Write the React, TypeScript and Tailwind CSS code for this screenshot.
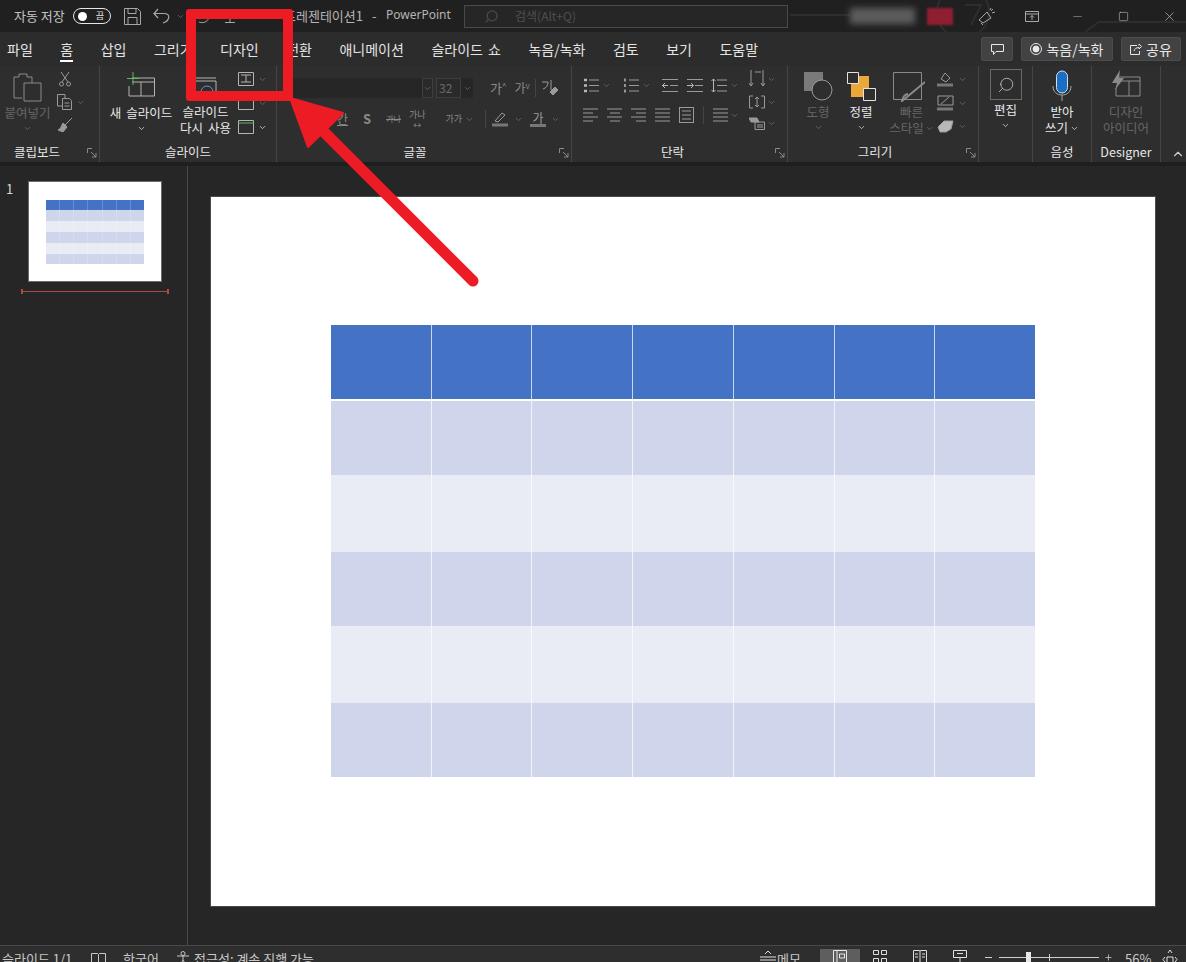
import type { ReactNode } from "react";
import { ChevronDown, ChevronUp, Minus, Plus, Search, Square, X } from "lucide-react";

const tabs = ["파일", "홈", "삽입", "그리기", "디자인", "전환", "애니메이션", "슬라이드 쇼", "녹음/녹화", "검토", "보기", "도움말"];
const rows = ["h-[76px] bg-[#4472c4]", "h-[74px] bg-[#cfd5ea]", "h-[77px] bg-[#e9ebf5]", "h-[74px] bg-[#cfd5ea]", "h-[77px] bg-[#e9ebf5]", "h-[74px] bg-[#cfd5ea]"];
const thumbRows = ["h-[10px] bg-[#4472c4]", "h-[11px] bg-[#cfd5ea]", "h-[11px] bg-[#e9ebf5]", "h-[11px] bg-[#cfd5ea]", "h-[11px] bg-[#e9ebf5]", "h-[10px] bg-[#cfd5ea]"];
const cols = [0, 1, 2, 3, 4, 5, 6];

function Chev({ on = false, className = "" }: { on?: boolean; className?: string }) {
  return <ChevronDown size={9} strokeWidth={2} className={`shrink-0 ${on ? "text-[#e0e0e0]" : "text-[#6e6e6e]"} ${className}`} />;
}

function Icon({ w = 16, h = 16, children, className = "" }: { w?: number; h?: number; children: ReactNode; className?: string }) {
  return (
    <svg width={w} height={h} viewBox={`0 0 ${w} ${h}`} fill="none" stroke="#9a9a9a" strokeWidth="1" className={`shrink-0 ${className}`}>
      {children}
    </svg>
  );
}

function Lines({ kind = "plain" }: { kind?: "plain" | "bullets" | "numbers" | "outdent" | "indent" | "spacing" }) {
  return (
    <Icon w={16} h={15}>
      {kind === "bullets" && <path d="M1 2h3M1 7.500h3M1 13h3" stroke="#b8b8b8" strokeWidth="2.500" />}
      {kind === "numbers" && <path d="M2 .500v3M2 6v3M2 11.500v3" stroke="#b8b8b8" strokeWidth="1.500" />}
      {kind === "outdent" && <path d="M0 7.500h6M3 5 .500 7.500 3 10" stroke="#b8b8b8" />}
      {kind === "indent" && <path d="M0 7.500h6M4 5l2.500 2.500L4 10" stroke="#b8b8b8" />}
      {kind === "spacing" && <path d="M2.500 1v13M.5 3l2-2 2 2M.5 12l2 2 2-2" stroke="#b8b8b8" />}
      {kind === "outdent" || kind === "indent" ? <path d="M0 1.500h16M8 7.500h8M0 13.500h16" /> : <path d="M6 2h10M6 7.500h10M6 13h10" />}
    </Icon>
  );
}

function Align({ kind }: { kind: number }) {
  const d = [
    "M0 2h15M0 6h10M0 10h15M0 14h10",
    "M0 2h15M3 6h10M0 10h15M3 14h10",
    "M0 2h15M5 6h10M0 10h15M5 14h10",
    "M0 2h15M0 6h15M0 10h15M0 14h15",
    "M.5 0v16M14.500 0v16M0 .500h15M0 15.500h15M3 4h9M3 8h9M3 12h9",
  ][kind];
  return (
    <Icon w={15} h={16}>
      <path d={d} />
    </Icon>
  );
}

function Group({ w, label, launcher, pad = "pr-[16px]", children }: { w: string; label: string; launcher?: boolean; pad?: string; children: ReactNode }) {
  return (
    <div className={`${w} h-full shrink-0 flex flex-col border-r border-[#454545]`}>
      <div className="h-[76px] flex">{children}</div>
      <div className={`relative h-[20px] flex items-center justify-center text-[12.500px] text-[#e6e6e6] ${launcher ? pad : ""}`}>
        {label}
        {launcher && (
          <svg width="10" height="10" viewBox="0 0 10 10" fill="none" stroke="#8a8a8a" className="absolute right-[2px] top-[6px]">
            <path d="M.5 5V.5H5M4 4l5 5M9 5v4H5" />
          </svg>
        )}
      </div>
    </div>
  );
}

function Label({ on = false, children }: { on?: boolean; children: ReactNode }) {
  return <div className={`text-[12.500px] leading-[16px] text-center whitespace-nowrap [word-spacing:2px] ${on ? "text-[#e8e8e8]" : "text-[#666666]"}`}>{children}</div>;
}

function TitleBar() {
  return (
    <div className="relative h-[32px] shrink-0 bg-[#202020] flex items-center text-[13px] text-[#c4c4c4] overflow-hidden">
      {/* faint wallpaper lines behind the title bar */}
      <svg width="1186" height="32" viewBox="0 0 1186 32" fill="none" stroke="#2e2e2e" strokeWidth="2" className="absolute left-0 top-0">
        <path d="M790 15h60M1085 32l14-10h87" />
        <circle cx="963" cy="12" r="26" />
        <path d="M965 5h16l-10 20" />
      </svg>
      <span className="relative ml-[14px] w-[59px] whitespace-nowrap">자동 저장</span>
      <div className="relative w-[38px] h-[16px] rounded-full border border-[#e6e6e6] flex items-center justify-between px-[4px]">
        <div className="w-[9px] h-[9px] rounded-full bg-white" />
        <span className="text-[9px] text-[#e6e6e6] mr-[2px]">끔</span>
      </div>
      <svg width="17" height="17" viewBox="0 0 17 17" fill="none" stroke="#a8a8a8" className="relative ml-[13px]">
        <path d="M.5.500h13l3 3v13H.500zM4 .500v5h8v-5M4 16.500v-7h9v7" />
      </svg>
      <svg width="18" height="16" viewBox="0 0 18 16" fill="none" stroke="#a8a8a8" strokeWidth="1.200" className="relative ml-[12px]">
        <path d="M5 1 1 5.500h10c7 0 6 7-1 9.500M1 5.500 5 10" />
      </svg>
      <Chev className="relative ml-[5px]" />
      <svg width="11" height="8" viewBox="0 0 11 8" fill="none" stroke="#a8a8a8" className="relative ml-[14px] mt-[8px]">
        <path d="M10 0c0 5-5 8-10 6" />
      </svg>
      <svg width="10" height="6" viewBox="0 0 10 6" fill="none" stroke="#a8a8a8" className="relative ml-[15px] mt-[7px]">
        <path d="M5 0v5M0 5.500h10" />
      </svg>
      <span className="relative ml-[49px] w-[180px] flex whitespace-nowrap text-[#b4b4b4]">
        <span className="w-[102px]">프레젠테이션1<span className="ml-[9px]">-</span></span>
        <span className="text-[12px] font-[family-name:'Noto_Sans',sans-serif]">PowerPoint</span>
      </span>
      <div className="relative w-[324px] h-[23px] border border-[#4a4a4a] bg-[#262626] flex items-center pl-[19px] text-[12px] text-[#4f4f4f]">
        <Search size={15} className="text-[#4a4a4a] -scale-x-100" />
        <span className="ml-[16px]">검색(Alt+Q)</span>
      </div>
      <div className="ml-[62px] w-[65px] h-[16px] bg-[#5c5c5c] blur-[3px]" />
      <div className="ml-[12px] w-[26px] h-[17px] bg-[#8f1f30] blur-[1px]" />
      <svg width="17" height="17" viewBox="0 0 17 17" fill="none" stroke="#a8a8a8" className="relative ml-[25px]">
        <path d="M1 12 9 4l4 6-8 5zM3 15l2 2M12 2l1-2M14 5l3-1M13 3l2-2" />
      </svg>
      <svg width="14" height="11" viewBox="0 0 14 11" fill="none" stroke="#a8a8a8" className="relative ml-[30px]">
        <path d="M.5.500h13v10H.500zM.5 3h13M7 9V4.500M5 6.500l2-2 2 2" />
      </svg>
      <Minus size={13} strokeWidth={1} className="relative ml-[32px] text-[#b0b0b0]" />
      <Square size={11} strokeWidth={1.200} className="relative ml-[34px] text-[#d0d0d0]" />
      <X size={15} strokeWidth={1} className="relative ml-[33px] text-[#d0d0d0]" />
    </div>
  );
}

function TabRow() {
  return (
    <div className="h-[34px] shrink-0 bg-[#2c2c2c] flex items-center pl-[7px] text-[14px] text-[#e4e4e4]">
      <div className="flex gap-[27.500px]">
        {tabs.map((t) => (
          <span key={t} className="relative whitespace-nowrap [word-spacing:2px]">
            {t}
            {t === "홈" && <span className="absolute left-0 right-0 top-[21px] h-[2px] bg-white" />}
          </span>
        ))}
      </div>
      <div className="ml-auto mr-[5px] flex gap-[8px] items-center text-[#e8e8e8]">
        <div className="w-[32px] h-[24px] rounded-[2px] bg-[#424242] border border-[#4c4c4c] flex items-center justify-center">
          <svg width="13" height="13" viewBox="0 0 13 13" fill="none" stroke="#e8e8e8">
            <path d="M.5 1.500h12v7H5l-2.500 3v-3H.500z" />
          </svg>
        </div>
        <div className="w-[92px] h-[24px] rounded-[2px] bg-[#424242] border border-[#4c4c4c] flex items-center justify-center gap-[4px]">
          <svg width="12" height="12" viewBox="0 0 12 12" fill="none" stroke="#e8e8e8">
            <circle cx="6" cy="6" r="5.500" />
            <circle cx="6" cy="6" r="3" fill="#e8e8e8" />
          </svg>
          녹음/녹화
        </div>
        <div className="w-[60px] h-[24px] rounded-[2px] bg-[#424242] border border-[#4c4c4c] flex items-center justify-center gap-[4px]">
          <svg width="12" height="12" viewBox="0 0 12 12" fill="none" stroke="#e8e8e8">
            <path d="M9 1v1.500M9 1l2.500 2.500L9 6V4.500C6 4.500 4.500 6 4 8M7 2.500H.5v9h9V8" />
          </svg>
          공유
        </div>
      </div>
    </div>
  );
}

function Ribbon() {
  return (
    <div className="h-[96px] shrink-0 bg-[#2e2e2e] flex">
      <Group w="w-[100px]" label="클립보드" launcher pad="pr-[25px]">
        <div className="w-[55px] flex flex-col items-center pt-[6px]">
          <svg width="29" height="30" viewBox="0 0 29 30" fill="none" stroke="#8a8a8a">
            <path d="M9 26H1V5h5V2h8v3h5v6M11 11h17v18H11z" />
          </svg>
          <div className="mt-[3px]"><Label>붙여넣기</Label></div>
          <Chev className="mt-[3px]" />
        </div>
        <div className="flex flex-col pt-[6px] pl-[2px] gap-[7px]">
          <Icon w={12} h={15} className="ml-[2px]">
            <path d="M2 0l7 10M10 0 3 10" />
            <circle cx="2.500" cy="12" r="2" />
            <circle cx="9.500" cy="12" r="2" />
          </Icon>
          <div className="flex items-center gap-[3px]">
            <Icon w={16} h={16}>
              <path d="M5 12H.5V.500H8V4M5.500 4.500h7l2 2v9h-9z" />
              <path d="M7.500 9h5M7.500 12h5" />
            </Icon>
            <Chev />
          </div>
          <Icon w={16} h={15}>
            <path d="M6 6l4 4-4 5-5-2c3-1 3-4 5-7zM8 8l7-7" fill="#9a9a9a" />
          </Icon>
        </div>
      </Group>
      <Group w="w-[177px]" label="슬라이드">
        <div className="w-[81px] flex flex-col items-center pt-[6px] pl-[1px]">
          <svg width="30" height="26" viewBox="0 0 30 26" fill="none" stroke="#b4b4b4">
            <path d="M6 6h22.500v18H3V14M15 10v14M6 10h22.500" />
            <path d="M7 0v13M1 6.500h12" stroke="#5fb85f" />
          </svg>
          <div className="mt-[7px]"><Label on>새 슬라이드</Label></div>
          <Chev on className="mt-[3px]" />
        </div>
        <div className="w-[49px] flex flex-col items-center pt-[9px]">
          <svg width="24" height="23" viewBox="0 0 24 23" fill="none" stroke="#b4b4b4">
            <path d="M1 3h21M1 6h21v17H1z" />
            <circle cx="13" cy="17" r="6" stroke="#5b9bd5" />
          </svg>
          <div className="mt-[6px]"><Label on>슬라이드</Label></div>
          <Label on>다시 사용</Label>
        </div>
        <div className="flex flex-col pl-[8px] pt-[6px] gap-[10px]">
          {["M3 3h10M8 3v7M3 10h10", "M3 3h10", "M.5 3h15"].map((d, i) => (
            <div key={d} className="flex items-center gap-[4px]">
              <svg width="16" height="14" viewBox="0 0 16 14" fill="none" stroke={i === 2 ? "#5fb85f" : "#b4b4b4"}>
                <path d="M.5 .500h15v13H.500z" stroke="#b4b4b4" />
                <path d={d} />
              </svg>
              <Chev on={i === 2} />
            </div>
          ))}
        </div>
      </Group>
      <Group w="w-[295px]" label="글꼴" launcher pad="pr-[18px]">
        <div className="pl-[12px] pt-[12px] flex flex-col">
          <div className="flex items-center text-[#6a6a6a]">
            <div className="w-[133px] h-[20px] bg-[#262626]" />
            <div className="w-[11px] h-[20px] bg-[#2a2a2a] border border-[#3e3e3e] flex items-center justify-center"><Chev /></div>
            <div className="ml-[3px] w-[25px] h-[20px] bg-[#2a2a2a] border border-[#3e3e3e] pl-[2px] text-[12px] leading-[18px]">32</div>
            <div className="w-[12px] h-[20px] bg-[#262626] flex items-center justify-center"><Chev /></div>
            <span className="ml-[17px] text-[13px] leading-[18px] text-[#8a8a8a]">가<sup className="text-[8px]">^</sup></span>
            <span className="ml-[8px] text-[12px] leading-[18px] text-[#8a8a8a]">가<sup className="text-[8px]">v</sup></span>
            <div className="ml-[5px] w-[1px] h-[18px] bg-[#444444]" />
            <svg width="18" height="18" viewBox="0 0 18 18" fill="none" stroke="#9a9a9a" className="ml-[5px]">
              <path d="M1 3h6c0 4-2 6-5 7M10 1v10" />
              <path d="m9 13 5-5 3 3-5 5z" fill="#9a9a9a" />
            </svg>
          </div>
          <div className="flex items-center mt-[10px] text-[#8a8a8a] h-[22px]">
            <span className="ml-[48px] text-[12px] underline">간</span>
            <span className="ml-[15px] text-[13px] font-bold">S</span>
            <span className="ml-[15px] text-[8px] line-through">가나</span>
            <span className="ml-[8px] flex flex-col items-center text-[9px] leading-[10px]">가나<span className="text-[8px] leading-[9px]">↔</span></span>
            <span className="ml-[20px] text-[9px]">가가</span>
            <Chev className="ml-[3px]" />
            <div className="ml-[11px] w-[1px] h-[18px] bg-[#444444]" />
            <svg width="16" height="16" viewBox="0 0 16 16" fill="none" stroke="#9a9a9a" className="ml-[6px]">
              <path d="M3 10 10 2l3 2-7 7z" />
              <path d="M0 14h16" strokeWidth="3" stroke="#777777" />
            </svg>
            <Chev className="ml-[6px]" />
            <div className="ml-[7px] flex flex-col items-center w-[16px] text-[12px] leading-[13px] text-[#9a9a9a]">
              가<div className="w-[16px] h-[3px] bg-[#777777]" />
            </div>
            <Chev className="ml-[5px]" />
          </div>
        </div>
      </Group>
      <Group w="w-[216px]" label="단락" launcher pad="pr-[14px]">
        <div className="pl-[11px] pt-[12px] w-[173px] flex flex-col gap-[13px]">
          <div className="flex items-center">
            <Lines kind="bullets" />
            <Chev className="ml-[3px]" />
            <div className="ml-[12px]"><Lines kind="numbers" /></div>
            <Chev className="ml-[3px]" />
            <div className="ml-[11px]"><Lines kind="outdent" /></div>
            <div className="ml-[9px]"><Lines kind="indent" /></div>
            <div className="ml-[8px]"><Lines kind="spacing" /></div>
            <Chev className="ml-[3px]" />
          </div>
          <div className="flex items-center gap-[9px]">
            <Align kind={0} />
            <Align kind={1} />
            <Align kind={2} />
            <Align kind={3} />
            <Align kind={4} />
            <div className="w-[1px] h-[18px] bg-[#444444]" />
            <div className="flex items-center gap-[2px]"><Align kind={3} /><Chev /></div>
          </div>
        </div>
        <div className="flex flex-col pt-[4px] pl-[4px] gap-[7px]">
          <div className="flex items-center gap-[2px]">
            <Icon w={16} h={18}>
              <path d="M2 0v16M0 13l2 3 2-3M14 0v16M12 13l2 3 2-3M6 2h6" />
            </Icon>
            <Chev />
          </div>
          <div className="flex items-center gap-[2px]">
            <Icon w={16} h={14}>
              <path d="M4 1H.5v12H4M12 1h3.500v12H12M8 2v10M6 4l2-2 2 2M6 10l2 2 2-2" />
            </Icon>
            <Chev />
          </div>
          <div className="flex items-center gap-[2px]">
            <Icon w={16} h={14}>
              <path d="M0 2h8l2 4H2z" fill="#9a9a9a" />
              <path d="M6 6h9.500v7.500H6zM8 9h6M8 11h6" />
            </Icon>
            <Chev />
          </div>
        </div>
      </Group>
      <Group w="w-[191px]" label="그리기" launcher>
        <div className="w-[60px] flex flex-col items-center pt-[6px]">
          <svg width="29" height="29" viewBox="0 0 29 29" fill="none">
            <path d="M0 0h19v19H0z" fill="#7a7a7a" />
            <circle cx="18" cy="18" r="10" fill="#2e2e2e" stroke="#9a9a9a" />
          </svg>
          <div className="mt-[3px]"><Label>도형</Label></div>
          <Chev className="mt-[3px]" />
        </div>
        <div className="w-[26px] flex flex-col items-center pt-[6px]">
          <svg width="29" height="29" viewBox="0 0 29 29" className="shrink-0" fill="none">
            <path d="M4 4h18v21H4z" fill="#eba83a" />
            <path d="M.5.500h11v11H.500zM16.500 16.500h12v12h-12z" fill="#2e2e2e" stroke="#e4e4e4" />
          </svg>
          <div className="mt-[3px]"><Label on>정렬</Label></div>
          <Chev on className="mt-[3px]" />
        </div>
        <div className="w-[51px] ml-[12px] flex flex-col items-center pt-[6px]">
          <svg width="32" height="30" viewBox="0 0 32 30" fill="none" stroke="#8a8a8a" className="-ml-[6px]">
            <path d="M.5.500h28v27H.500z" />
            <path d="M32 10 14 25l-5 4c1-4 3-7 6-7" strokeWidth="2" />
          </svg>
          <div className="mt-[2px]"><Label>빠른</Label></div>
          <div className="flex items-center gap-[1px]"><Label>스타일</Label><Chev /></div>
        </div>
        <div className="flex flex-col pt-[5px] gap-[8px]">
          <div className="flex items-center gap-[4px]">
            <Icon w={17} h={16}><path d="m4 8 4-6 5 5-4 4zM0 14h16" /><path d="M0 14h16" strokeWidth="3" stroke="#777777" /></Icon>
            <Chev />
          </div>
          <div className="flex items-center gap-[4px]">
            <Icon w={17} h={16}><path d="M1 1h15v9H1zM4 9l8-7" /><path d="M0 14h16" strokeWidth="3" stroke="#777777" /></Icon>
            <Chev />
          </div>
          <div className="flex items-center gap-[4px]">
            <Icon w={17} h={14}><path d="m1 8 6-6h9l-2 8-5 3H3z" fill="#b8b8b8" /></Icon>
            <Chev />
          </div>
        </div>
      </Group>
      <Group w="w-[54px]" label="">
        <div className="w-full flex flex-col items-center pt-[3px]">
          <div className="w-[32px] h-[31px] border border-[#6a6a6a] flex items-center justify-center">
            <Search size={18} strokeWidth={1} className="text-[#d0d0d0] -scale-x-100" />
          </div>
          <div className="mt-[2px]"><Label on>편집</Label></div>
          <Chev on className="mt-[3px]" />
        </div>
      </Group>
      <Group w="w-[59px]" label="음성">
        <div className="w-full flex flex-col items-center pt-[4px]">
          <svg width="20" height="31" viewBox="0 0 20 31" fill="none">
            <rect x="4.500" y="1" width="11" height="22" rx="5.500" fill="#1a6fc4" stroke="#cfe0f0" />
            <path d="M1 16c0 6 4 9 9 9s9-3 9-9M10 25v6" stroke="#a8a8a8" />
          </svg>
          <div className="mt-[3px]"><Label on>받아</Label></div>
          <div className="flex items-center gap-[2px]"><Label on>쓰기</Label><Chev on /></div>
        </div>
      </Group>
      <Group w="w-[69px]" label="Designer">
        <div className="w-full flex flex-col items-center pt-[4px]">
          <svg width="30" height="28" viewBox="0 0 30 28" fill="none" stroke="#8a8a8a">
            <path d="M8 7h21v19H5V18M8 11h21M18 11v15" />
            <path d="M9 0 1 13h5l-2 7 9-12H8z" fill="#8a8a8a" stroke="none" />
          </svg>
          <div className="mt-[6px]"><Label>디자인</Label></div>
          <Label>아이디어</Label>
        </div>
      </Group>
      <div className="flex-1 flex items-end justify-end pr-[1px] pb-[1px]">
        <ChevronUp size={14} className="text-[#cfcfcf]" />
      </div>
    </div>
  );
}

function Table({ thumb = false }: { thumb?: boolean }) {
  return (
    <div className={thumb ? "w-[98px]" : "w-[704px]"}>
      {(thumb ? thumbRows : rows).map((r, i) => (
        <div key={i} className={`flex ${r} ${!thumb && i === 0 ? "border-b-2 border-white" : ""}`}>
          {cols.map((c) => (
            <div key={c} className={`flex-1 ${c < 6 ? (thumb ? "border-r border-white/20" : "border-r border-white/70") : ""}`} />
          ))}
        </div>
      ))}
    </div>
  );
}

function StatusBar() {
  return (
    <div className="h-[17px] shrink-0 bg-[#2e2e2e] border-t border-[#484848] flex items-start text-[13px] leading-[25px] text-[#c8c8c8] overflow-hidden">
      <span className="ml-[2px] w-[69px] whitespace-nowrap">슬라이드 1/1</span>
      <svg width="15" height="13" viewBox="0 0 15 13" fill="none" stroke="#c8c8c8" className="ml-[20px] mt-[7px]">
        <path d="M.5.500h6l1 1 1-1h6v12h-14zM7.500 1.500v11" />
      </svg>
      <span className="ml-[17px] w-[37px]">한국어</span>
      <svg width="15" height="14" viewBox="0 0 15 14" fill="none" stroke="#c8c8c8" className="ml-[16px] mt-[5px]">
        <circle cx="7" cy="2.500" r="2" />
        <path d="M1 5h12M7 5v4l-3 5M7 9l3 5" />
      </svg>
      <span className="ml-[3px] whitespace-nowrap">접근성: 계속 진행 가능</span>
      <div className="ml-auto flex items-start">
        <svg width="16" height="13" viewBox="0 0 16 13" fill="none" stroke="#e0e0e0" className="mt-[5px]">
          <path d="M5 3l3-3 3 3M0 6h16M0 9h16" />
        </svg>
        <span className="ml-[1px]">메모</span>
        <div className="ml-[19px] w-[40px] h-[17px] mt-[3px] bg-[#5e5e5e] flex justify-center pt-[1px]">
          <svg width="14" height="13" viewBox="0 0 14 13" fill="none" stroke="#e8e8e8">
            <path d="M.5.500h13v12H.500zM4 .500v12M6.500 4h5v4h-5z" />
          </svg>
        </div>
        <svg width="14" height="13" viewBox="0 0 14 13" fill="none" stroke="#e0e0e0" className="ml-[13px] mt-[4px]">
          <path d="M.5.500h5v4h-5zM8.500.500h5v4h-5zM.5 8.500h5v4h-5zM8.500 8.500h5v4h-5z" />
        </svg>
        <svg width="14" height="13" viewBox="0 0 14 13" fill="none" stroke="#e0e0e0" className="ml-[26px] mt-[4px]">
          <path d="M.5.500h6l.5 1 .5-1h6v12h-13zM7 1.500v11M2 4h3M2 7h3M9 4h3M9 7h3" />
        </svg>
        <svg width="14" height="13" viewBox="0 0 14 13" fill="none" stroke="#e0e0e0" className="ml-[26px] mt-[4px]">
          <path d="M.5.500h13v7H.500zM7 7.500v5M4 3.500h6" />
        </svg>
        <span className="ml-[18px] mt-[11px] w-[7px] h-[1px] bg-[#d0d0d0]" />
        <div className="ml-[7px] mt-[11px] w-[100px] h-[1px] bg-[#d0d0d0] flex relative">
          <span className="absolute left-[27px] -top-[5px] w-[5px] h-[12px] bg-[#e8e8e8]" />
          <span className="absolute left-[50px] -top-[3px] w-[1px] h-[7px] bg-[#d0d0d0]" />
        </div>
        <Plus size={9} className="ml-[5px] mt-[7px] text-[#d0d0d0]" />
        <span className="ml-[12px] w-[37px]">56%</span>
        <svg width="16" height="15" viewBox="0 0 16 15" fill="none" stroke="#e0e0e0" className="mt-[3px] mr-[8px]">
          <path d="M5 8h6v6H5zM6 4l2-3 2 3M3 8 1 10.500 3 13M13 8l2 2.500-2 2.500" />
        </svg>
      </div>
    </div>
  );
}

export default function App() {
  return (
    <div className="relative w-[1186px] h-[962px] overflow-hidden flex flex-col bg-[#262626] font-[family-name:'Noto_Sans_CJK_KR','Noto_Sans',sans-serif]">
      <TitleBar />
      <TabRow />
      <Ribbon />
      <div className="h-[4px] shrink-0 bg-[#1f1f1f]" />
      <div className="flex-1 flex min-h-0">
        <div className="w-[188px] shrink-0 border-r border-[#4a4a4a] pl-[6px] pt-[15px] flex">
          <span className="w-[22px] text-[13px] leading-[16px] text-[#d8d8d8]">1</span>
          <div className="w-[134px] flex flex-col">
            <div className="w-[134px] h-[101px] bg-white border border-[#6a6a6a] pl-[17px] pt-[18px]">
              <Table thumb />
            </div>
            <div className="relative mt-[9px] -ml-[7px] w-[148px] h-[1px] bg-[#b0493f]">
              <span className="absolute left-0 -top-[2px] w-[2px] h-[5px] bg-[#b0493f]" />
              <span className="absolute right-0 -top-[2px] w-[2px] h-[5px] bg-[#b0493f]" />
            </div>
          </div>
        </div>
        <div className="flex-1 pl-[23px] pt-[31px]">
          <div className="w-[944px] h-[709px] bg-white pl-[120px] pt-[128px] shadow-[0_0_0_1px_#4a4a4a]">
            <Table />
          </div>
        </div>
      </div>
      <StatusBar />

      {/* annotation drawn over the screenshot */}
      <div className="absolute left-[186px] top-[9px] w-[107px] h-[92px] border-[10px] border-[#ed1c24] rounded-[3px]" />
      <svg width="1186" height="962" viewBox="0 0 1186 962" className="absolute left-0 top-0 pointer-events-none">
        <path d="M473 281 320 128" stroke="#ed1c24" strokeWidth="11" strokeLinecap="round" />
        <path d="M290 98l18 49 35-34z" fill="#ed1c24" stroke="#ed1c24" strokeWidth="2" strokeLinejoin="round" />
      </svg>
    </div>
  );
}
